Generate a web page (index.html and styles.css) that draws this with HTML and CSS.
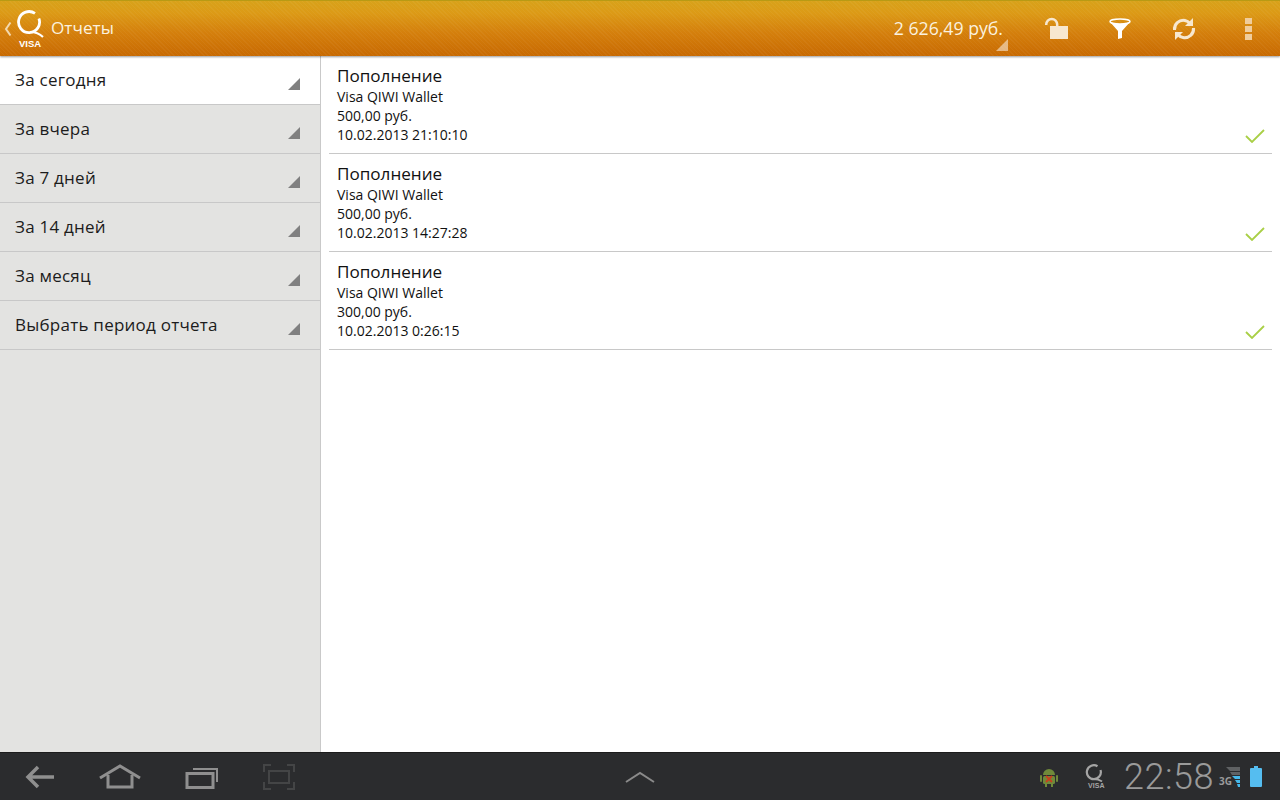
FILE: index.html
```html
<!DOCTYPE html>
<html lang="ru">
<head>
  <meta charset="UTF-8" />
  <meta name="viewport" content="width=device-width, initial-scale=1.0" />
  <title>Отчеты</title>
  <link rel="stylesheet" href="styles.css">
</head>
<body>
  <header class="action-bar">
    <svg class="back-caret" width="8" height="16" viewBox="0 0 8 16"><path d="M6.500 1.500L2 8l4.500 6.500" fill="none" stroke="#f3d9ae" stroke-width="2"/></svg>
    <div class="logo">
      <svg width="30" height="30" viewBox="0 0 30 30"><path d="M19 3.400A10.500 10.500 0 1 0 22.900 8.400" fill="none" stroke="#fff" stroke-width="2.800"/><path d="M14 22c5 0 9 1 13 5" fill="none" stroke="#fff" stroke-width="2"/></svg>
      <span class="logo-visa">VISA</span>
    </div>
    <h1 class="title">Отчеты</h1>
    <div class="balance">
      2 626,49 руб.
      <span class="balance-corner"></span>
    </div>
    <div class="actions">
      <svg width="26" height="26" viewBox="0 0 26 26"><rect x="7" y="10" width="18" height="13" fill="#f7e7cf"/><path d="M3.200 9V8.500a5.500 5.500 0 0 1 11 0V11" fill="none" stroke="#f7e7cf" stroke-width="2.500"/></svg>
      <svg width="24" height="24" viewBox="0 0 24 24"><ellipse cx="12" cy="4.500" rx="10" ry="2.500" fill="none" stroke="#fff" stroke-width="1.500"/><path d="M2 5l8 9v8l4-1v-7l8-9c-6 2.500-14 2.500-20 0z" fill="#fff"/></svg>
      <svg width="26" height="26" viewBox="0 0 26 26"><path d="M3.500 14C3 8 8 3.500 14 4.500c2 .3 3.500 1.200 5 3" fill="none" stroke="#f7e7cf" stroke-width="3"/><path d="M22.500 12c.5 6-4.500 10.500-10.500 9.500-2-.3-3.500-1.200-5-3" fill="none" stroke="#f7e7cf" stroke-width="3"/><path d="M22 2v8h-8z" fill="#f7e7cf"/><path d="M4 24v-8h8z" fill="#f7e7cf"/></svg>
      <div class="overflow"><i></i><i></i><i></i></div>
    </div>
  </header>

  <main class="content">
    <nav class="sidebar">
      <div class="period period-active">За сегодня<span class="corner"></span></div>
      <div class="period">За вчера<span class="corner"></span></div>
      <div class="period">За 7 дней<span class="corner"></span></div>
      <div class="period">За 14 дней<span class="corner"></span></div>
      <div class="period">За месяц<span class="corner"></span></div>
      <div class="period">Выбрать период отчета<span class="corner"></span></div>
    </nav>
    <section class="reports">
      <div class="report">
        <div class="report-title">Пополнение</div>
        <div>Visa QIWI Wallet</div>
        <div>500,00 руб.</div>
        <div>10.02.2013 21:10:10</div>
        <svg class="check" width="20" height="14" viewBox="0 0 20 14"><path d="M1 7l6 6L19 1" fill="none" stroke="#a9cf46" stroke-width="1.800"/></svg>
      </div>
      <div class="report">
        <div class="report-title">Пополнение</div>
        <div>Visa QIWI Wallet</div>
        <div>500,00 руб.</div>
        <div>10.02.2013 14:27:28</div>
        <svg class="check" width="20" height="14" viewBox="0 0 20 14"><path d="M1 7l6 6L19 1" fill="none" stroke="#a9cf46" stroke-width="1.800"/></svg>
      </div>
      <div class="report">
        <div class="report-title">Пополнение</div>
        <div>Visa QIWI Wallet</div>
        <div>300,00 руб.</div>
        <div>10.02.2013 0:26:15</div>
        <svg class="check" width="20" height="14" viewBox="0 0 20 14"><path d="M1 7l6 6L19 1" fill="none" stroke="#a9cf46" stroke-width="1.800"/></svg>
      </div>
    </section>
  </main>

  <footer class="system-bar">
    <div class="nav-buttons">
      <svg width="30" height="26" viewBox="0 0 30 26"><path d="M29 13H3M13 3L3 13l10 10" fill="none" stroke="#8f8f8f" stroke-width="3.500"/></svg>
      <svg width="42" height="26" viewBox="0 0 42 26"><path d="M1 14L21 2l20 12" fill="none" stroke="#8f8f8f" stroke-width="3"/><path d="M9 11v12h24V11" fill="none" stroke="#8f8f8f" stroke-width="3"/></svg>
      <svg width="34" height="24" viewBox="0 0 34 24"><rect x="2" y="8.500" width="26" height="14" fill="none" stroke="#8f8f8f" stroke-width="3"/><path d="M8 4h24v13" fill="none" stroke="#8f8f8f" stroke-width="2"/></svg>
      <svg width="32" height="26" viewBox="0 0 32 26"><path d="M1 8V1h7M24 1h7v7M31 18v7h-7M8 25H1v-7" fill="none" stroke="#444546" stroke-width="2"/><rect x="6" y="7" width="20" height="12" fill="none" stroke="#444546" stroke-width="2"/></svg>
    </div>
    <svg class="nav-up" width="30" height="12" viewBox="0 0 30 12"><path d="M1 11L15 2l14 9" fill="none" stroke="#8a8a8a" stroke-width="2"/></svg>
    <div class="tray">
      <svg width="20" height="20" viewBox="0 0 20 20"><path d="M4 8a6 6 0 0 1 12 0z" fill="#6f8a3a"/><rect x="4" y="9" width="12" height="8" rx="1.500" fill="#6f8a3a"/><rect x="1" y="8" width="2" height="7" rx="1" fill="#6f8a3a"/><rect x="17" y="8" width="2" height="7" rx="1" fill="#6f8a3a"/><rect x="6" y="17" width="2" height="3" fill="#6f8a3a"/><rect x="12" y="17" width="2" height="3" fill="#6f8a3a"/><path d="M7 9l6 6M13 9l-6 6" stroke="#c8401e" stroke-width="1.800"/></svg>
      <div class="tray-logo">
        <svg width="18" height="18" viewBox="0 0 18 18"><path d="M12.500 2.200A7 7 0 1 0 15.500 6" fill="none" stroke="#a5a5a5" stroke-width="2.200"/><path d="M9 15c3 0 6 1 8 2.500" fill="none" stroke="#a5a5a5" stroke-width="1.800"/></svg>
        <span class="tray-visa">VISA</span>
      </div>
      <div class="clock">22:58</div>
      <div class="signal">
        <span class="signal-label">3G</span>
        <svg width="16" height="20" viewBox="0 0 16 20"><path d="M2 0h14v4H6z" fill="#5f6163"/><path d="M6 5h10v3H8z" fill="#5f6163"/><path d="M8 9h8v3h-5z" fill="#46b8ea"/><path d="M11 13h5v3h-3z" fill="#46b8ea"/><path d="M13 17h3v3h-2z" fill="#46b8ea"/></svg>
      </div>
      <svg class="battery" width="12" height="21" viewBox="0 0 12 21"><path d="M4 0h4v2h3a1 1 0 0 1 1 1v17a1 1 0 0 1-1 1H1a1 1 0 0 1-1-1V3a1 1 0 0 1 1-1h3z" fill="#55bdf0"/></svg>
    </div>
  </footer>
</body>
</html>
```

FILE: styles.css
```css
html, body {
  height: 100%;
}
body {
  margin: 0;
  font-family: "Open Sans", "Noto Sans", sans-serif;
  background: white;
  color: black;
  display: flex;
  flex-direction: column;
  overflow: hidden;
}
.action-bar {
  position: relative;
  z-index: 1;
  flex: none;
  height: 56px;
  display: flex;
  align-items: center;
  padding-left: 4px;
  box-sizing: border-box;
  background:
    repeating-linear-gradient(45deg, rgba(255,255,255,0.04) 0 1px, transparent 1px 3px),
    linear-gradient(to bottom, #d8a21a 0, #dc9a16 12px, #d47f0c 32px, #c86a02 55px);
  border-top: 1px solid #b89a14;
  box-shadow: 0 1px 2px rgba(0,0,0,0.4);
  color: #fbf1df;
}
.back-caret {
  flex: none;
  margin-right: 4px;
}
.logo {
  position: relative;
  width: 29px;
  height: 46px;
  flex: none;
}
.logo svg {
  display: block;
  margin-top: 4px;
}
.logo-visa {
  position: absolute;
  left: 3px;
  top: 32px;
  font-family: "Liberation Sans", sans-serif;
  font-size: 9.500px;
  font-weight: bold;
  color: white;
}
.title {
  margin: 0 0 2px 6px;
  font-size: 17.200px;
  font-weight: normal;
}
.balance {
  position: relative;
  margin-left: auto;
  margin-bottom: 2px;
  padding-right: 5px;
  font-size: 17.700px;
  line-height: 52px;
}
.balance-corner {
  position: absolute;
  right: 0;
  bottom: 3px;
  border-style: solid;
  border-width: 0 0 12px 12px;
  border-color: transparent transparent rgba(255,255,255,0.5) transparent;
}
.actions {
  width: 272px;
  display: flex;
  align-items: center;
  box-sizing: border-box;
  padding-left: 35px;
  gap: 39px;
}
.overflow {
  display: flex;
  flex-direction: column;
  gap: 2px;
  margin-left: 9px;
}
.overflow i {
  display: block;
  width: 7px;
  height: 6px;
  background: #f0cd9c;
}
.content {
  flex: 1;
  display: flex;
  min-height: 0;
}
.sidebar {
  flex: none;
  width: 320px;
  background: #e3e3e1;
  border-right: 1px solid #c9c9c9;
}
.period {
  position: relative;
  height: 49px;
  box-sizing: border-box;
  padding: 12px 0 0 15px;
  border-bottom: 1px solid #c8c8c8;
  font-size: 17px;
  line-height: 23px;
  letter-spacing: 0.24px;
  color: #1c1c1c;
}
.period-active {
  background: white;
}
.corner {
  position: absolute;
  right: 20px;
  bottom: 14px;
  border-style: solid;
  border-width: 0 0 12px 12px;
  border-color: transparent transparent #808080 transparent;
}
.reports {
  flex: 1;
  padding: 0 8px;
}
.report {
  position: relative;
  height: 98px;
  box-sizing: border-box;
  padding: 9px 8px 0;
  border-bottom: 1px solid #c8c8c8;
  font-size: 14px;
  line-height: 19px;
  color: #111;
}
.report-title {
  font-size: 17.100px;
  line-height: 22px;
  margin-bottom: 0;
}
.check {
  position: absolute;
  right: 7px;
  bottom: 10px;
}
.system-bar {
  position: relative;
  flex: none;
  height: 48px;
  display: flex;
  align-items: center;
  background: #2b2c2e;
  border-top: 1px solid #1c1c1c;
  box-sizing: border-box;
}
.nav-buttons {
  display: flex;
  align-items: center;
  gap: 44px;
  padding-left: 25px;
}
.nav-up {
  position: absolute;
  left: 625px;
  top: 18px;
}
.tray {
  margin-left: auto;
  display: flex;
  align-items: center;
  padding-right: 18px;
}
.tray-logo {
  position: relative;
  width: 18px;
  height: 32px;
  margin-left: 26px;
  margin-right: 21px;
}
.tray-logo svg {
  display: block;
  margin-top: 3px;
}
.tray-visa {
  position: absolute;
  left: 3px;
  top: 21px;
  font-family: "Liberation Sans", sans-serif;
  font-size: 7px;
  font-weight: bold;
  color: #a5a5a5;
}
.clock {
  font-family: "Roboto", "Liberation Sans", sans-serif;
  font-weight: 300;
  font-size: 36px;
  color: #9a9a9a;
  letter-spacing: 0.5px;
}
.signal {
  display: flex;
  align-items: flex-end;
  margin-left: 5px;
}
.signal-label {
  position: relative;
  margin-right: -8px;
  font-size: 10px;
  line-height: 11px;
  font-weight: bold;
  color: #9a9a9a;
}
.battery {
  margin-left: 10px;
}
```
